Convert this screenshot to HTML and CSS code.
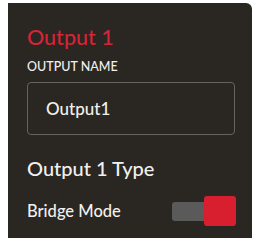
FILE: index.html
```html
<!DOCTYPE html>
<html lang="en">
<head>
    <meta charset="UTF-8">
    <meta name="viewport" content="width=device-width, initial-scale=1.0">
    <title>Output 1</title>
    <link rel="stylesheet" href="styles.css">
</head>
<body>
    <div class="panel">
        <h2 class="title">Output 1</h2>
        <label class="field-label" for="outputName">OUTPUT NAME</label>
        <div class="name-box" id="outputName">Output1</div>

        <h3 class="section">Output 1 Type</h3>
        <div class="row">
            <span class="row-label">Bridge Mode</span>
            <div class="toggle on">
                <div class="track"></div>
                <div class="knob"></div>
            </div>
        </div>
    </div>
</body>
</html>
```

FILE: styles.css
```css
body {
    margin: 0;
    background: #ffffff;
    font-family: Lato, 'Open Sans', sans-serif;
    font-weight: 500;
}
.panel {
    margin: 3px 0 0 8px;
    width: 244px;
    height: 235px;
    box-sizing: border-box;
    padding: 23px 0 0 19px;
    background: #2a2622;
    border-top-right-radius: 6px;
    color: #f2f0ee;
}
.title {
    margin: 0;
    font-size: 21.5px;
    line-height: 22px;
    font-weight: 500;
    color: #d42437;
}
.field-label {
    display: block;
    margin-top: 12px;
    font-size: 12.5px;
    line-height: 13px;
}
.name-box {
    margin-top: 9px;
    width: 208px;
    height: 53px;
    box-sizing: border-box;
    border: 1px solid #67625d;
    border-radius: 4px;
    padding-left: 18px;
    display: flex;
    align-items: center;
    font-size: 17px;
}
.section {
    margin: 23px 0 0;
    font-size: 20px;
    line-height: 20px;
    font-weight: 500;
}
.row {
    margin-top: 18px;
    width: 209px;
    display: flex;
    align-items: center;
    justify-content: space-between;
}
.row-label {
    font-size: 16.5px;
}
.toggle {
    position: relative;
    width: 64px;
    height: 30px;
}
.track {
    position: absolute;
    left: 0;
    top: 6px;
    width: 58px;
    height: 19px;
    border-radius: 3px;
    background: #5a5a5b;
}
.knob {
    position: absolute;
    right: 0;
    top: 0;
    width: 32px;
    height: 30px;
    border-radius: 3px;
    background: #d81f30;
}
```
